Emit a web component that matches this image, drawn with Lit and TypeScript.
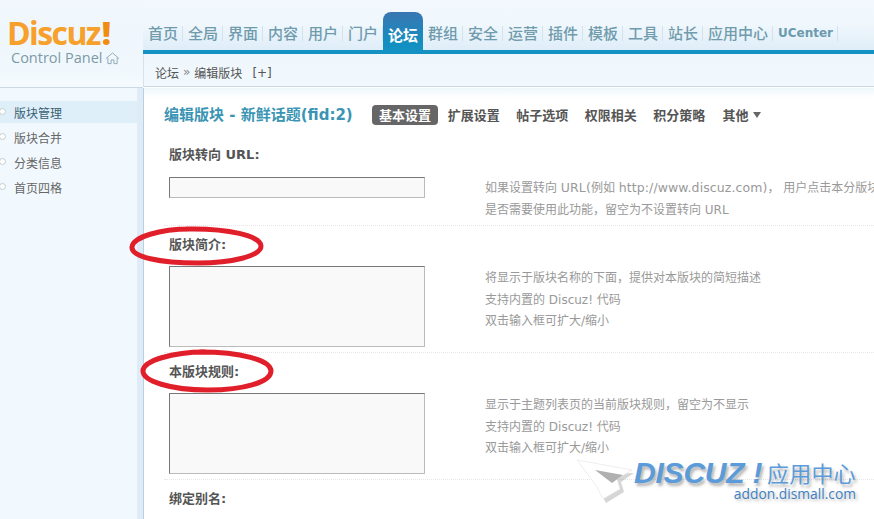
import { LitElement, html, css, svg } from "lit";
import { customElement } from "lit/decorators.js";

const NAV = ["首页","全局","界面","内容","用户","门户","论坛","群组","安全","运营","插件","模板","工具","站长"];
const SIDE = ["版块管理","版块合并","分类信息","首页四格"];
const TABS = ["基本设置","扩展设置","帖子选项","权限相关","积分策略"];

@customElement("app-root")
export class AppRoot extends LitElement {
  static styles = css`
    :host { display:block; width:874px; height:519px; overflow:hidden; position:relative; background:#fff;
      font-family:"DejaVu Sans","Noto Sans CJK SC",sans-serif; font-size:12px; color:#666; }
    .top { display:grid; grid-template-columns:143px 1fr; height:88px; }
    .brand { border-bottom:1px solid #c9dae2; background:linear-gradient(#f1f7fc,#eff7fc 60%,#f4fafe);
      padding:17px 0 0 7px; height:70px; }
    .logo { font-family:"Open Sans",sans-serif; font-weight:700; font-size:32px; line-height:32px; letter-spacing:-1.6px; color:#f7a02c; }
    .logo i { font-style:normal; color:#f08c12; font-weight:800; margin-left:2px; }
    .cp { display:flex; align-items:center; gap:3px; margin:0 0 0 4px; font-family:"Open Sans",sans-serif; font-size:14.5px; line-height:18px; color:#7d9aa8; }
    .right { display:flex; flex-direction:column; min-width:0; }
    .navband { height:50px; box-sizing:border-box; padding-top:12px; background:linear-gradient(#f2f8fd 0,#f1f8fd 22px,#dfedf8 100%); }
    .nav { display:flex; height:42px; align-items:flex-start; position:relative; z-index:1; }
    .nav a { width:40px; height:38px; flex:none; box-sizing:border-box; padding-top:3px; display:flex; align-items:center; justify-content:center; position:relative;
      font-size:15px; font-weight:500; color:#6f9bac; }
    .nav a::after { content:""; position:absolute; right:0; top:14px; height:15px; width:1px; background:#d3e3ec; }
    .nav a.on { height:42px; padding-bottom:4px; padding-top:7px; color:#fff; font-weight:700;
      border-radius:8px 8px 0 0; background:linear-gradient(#3a76b2,#128fc0 75%,#1592c4); }
    .nav a.on::after { display:none; }
    .nav a.app { width:70px; }
    .nav a.uc { width:65px; font-size:12px; font-weight:700; color:#6b9aae; }
    .line { height:4px; flex:none; background:#1592c4; }
    .crumb { height:33px; flex:none; box-sizing:border-box; display:flex; align-items:center; gap:4px; padding:4px 0 0 11px;
      background:linear-gradient(#eef6fc,#f2f9fe); border-left:1px solid #d6e3ea; border-bottom:1px solid #c9dae2; color:#555; }
    .crumb b { font-weight:400; color:#888; }
    .crumb span.plus { margin-left:6px; line-height:20px; padding-top:2px; }
    .body { display:grid; grid-template-columns:144px 1fr; height:431px; }
    .side { background:#f2f9fe; border-right:1px solid #b9d0df; box-sizing:border-box; box-shadow:inset -6px 0 0 #dfebf6; padding-top:13px; }
    .side div { height:22px; margin:0 6px 3px 0; padding-left:14px; display:flex; align-items:center; position:relative; color:#666; }
    .side div::before { content:""; position:absolute; left:-1px; top:7px; width:5px; height:5px; border:1px solid #c4ccd0; border-radius:50%; background:#fff; }
    .side div.on { background:#deeffa; color:#3b5f73; }
    .main { min-width:0; padding:17px 0 0 20px; background:linear-gradient(#eef7fb,#fff 10px); overflow:hidden; }
    .head { display:flex; align-items:center; height:20px; margin-bottom:11px; white-space:nowrap; }
    .title { font-size:15px; font-weight:700; color:#3a94b4; width:208px; flex:none; line-height:20px; margin-top:-1px; }
    .tabs { display:flex; align-items:center; font-size:13px; font-weight:700; color:#555; }
    .tabs span { width:68.5px; height:20px; line-height:21px; text-align:center; white-space:nowrap; flex:none; }
    .tabs span.on { background:#666; color:#fff; border-radius:4px; width:66px; margin-right:1.5px; }
    .tabs .more { width:auto; display:flex; align-items:center; gap:4px; padding-left:9px; }
    .more::after { content:""; border:4px solid transparent; border-top:6px solid #666; border-bottom:0; }
    .sec { padding:8px 0 5px 5px; border-bottom:1px dotted #e6e6e6; }
    .sec.first { padding-bottom:4px; }
    .sec.last { border:0; }
    .lab { font-size:13px; font-weight:700; color:#555; height:20px; line-height:22px; margin-bottom:12px; white-space:nowrap; }
    .first .lab { margin-bottom:13px; }
    .row { display:flex; white-space:nowrap; }
    .inp { width:256px; flex:none; box-sizing:border-box; background:#f9f9f9; height:21px; border:1px solid; border-color:#777 #bbb #bbb #777; }
    .inp.ta { height:81px; }
    .hint { margin:0 0 0 60px; line-height:21.5px; color:#999; }
    .sec:not(.first) .hint { margin-top:2px; }
    .hint span { font-size:12.5px; letter-spacing:.1px; }
    .ink { position:absolute; left:0; top:0; width:874px; height:519px; pointer-events:none; }
    .mark { position:absolute; left:634px; top:458px; width:226px; pointer-events:none; white-space:nowrap; color:#5b9bd9; }
    .mark .l1 { display:flex; align-items:center; height:29px; text-shadow:2px 3px 3px rgba(90,90,90,.45); }
    .mark .d { font-family:"Liberation Sans",sans-serif; font-style:italic; font-weight:700; font-size:30px; line-height:29px; letter-spacing:-.2px; width:133px; }
    .mark .c { font-family:"Noto Sans CJK SC",sans-serif; font-size:22px; line-height:29px; letter-spacing:.2px; }
    .mark .l2 { font-family:"Open Sans",sans-serif; font-size:13.8px; line-height:14px; text-align:right; color:#3f7fc0; text-shadow:2px 2px 3px rgba(90,90,90,.4); padding-right:4px; }
  `;

  private sec(label: string, hints: unknown[], ta: boolean, cls = "") {
    return html`<section class="sec ${cls}">
      <div class="lab">${label}</div>
      ${hints.length ? html`<div class="row">
        <div class="inp ${ta ? "ta" : ""}"></div>
        <div class="hint">${hints.map((h) => html`<div>${h}</div>`)}</div>
      </div>` : ""}
    </section>`;
  }

  render() {
    return html`
      <div class="top">
        <div class="brand">
          <div class="logo">Discuz<i>!</i></div>
          <div class="cp">Control Panel
            <svg width="15" height="13" viewBox="0 0 16 14" fill="none" stroke="#8aa6b2" stroke-width="1">
              <path d="M.8 7.2 8 1l7.2 6.2M3 6v6.5h3.5V8.5h3v4H13V6"/>
            </svg>
          </div>
        </div>
        <div class="right">
          <div class="navband">
            <nav class="nav">
              ${NAV.map((n) => html`<a class=${n === "论坛" ? "on" : ""}>${n}</a>`)}
              <a class="app">应用中心</a><a class="uc">UCenter</a>
            </nav>
          </div>
          <div class="line"></div>
          <div class="crumb">论坛 <b>»</b> 编辑版块 <span class="plus">[+]</span></div>
        </div>
      </div>
      <div class="body">
        <aside class="side">
          ${SIDE.map((s, i) => html`<div class=${i === 0 ? "on" : ""}>${s}</div>`)}
        </aside>
        <main class="main">
          <div class="head">
            <div class="title">编辑版块 - 新鲜话题(fid:2)</div>
            <div class="tabs">
              ${TABS.map((t, i) => html`<span class=${i === 0 ? "on" : ""}>${t}</span>`)}
              <span class="more">其他</span>
            </div>
          </div>
          ${this.sec("版块转向 URL:", [html`如果设置转向 <span>URL(</span>例如 <span>http://www.discuz.com)</span>，&nbsp;用户点击本分版块将进入转向中设置的 URL`, "是否需要使用此功能，留空为不设置转向 URL"], false, "first")}
          ${this.sec("版块简介:", ["将显示于版块名称的下面，提供对本版块的简短描述", "支持内置的 Discuz! 代码", "双击输入框可扩大/缩小"], true)}
          ${this.sec("本版块规则:", ["显示于主题列表页的当前版块规则，留空为不显示", "支持内置的 Discuz! 代码", "双击输入框可扩大/缩小"], true)}
          ${this.sec("绑定别名:", [], false, "last")}
        </main>
      </div>
      <svg class="ink" viewBox="0 0 874 519" fill="none">
        ${svg`<g stroke="#e01f2b" stroke-width="5" stroke-linecap="round">
          <path d="M190 229C160 229 133 237 132 247C131 257 160 263 198 263C232 263 261 256 261 246C261 236 228 228 186 229"/>
          <path d="M205 352C172 352 143 361 143 371C143 381 170 390 208 390C244 390 271 382 271 371C271 360 240 352 200 352"/>
        </g>
        <path d="M596 475 L634 473 L621 482 L624 492 L606 503 L600 492Z" fill="#8a8a8a" opacity=".35"/>
        <path d="M577 460 L632 470 L617 479 L620 489 L603 499 L597 487Z" fill="#fff" stroke="#e6e6e6" stroke-width=".7"/>
        <path d="M595 470 L623 475 L612 483Z" fill="#b0b0b0"/>`}
      </svg>
      <div class="mark">
        <div class="l1"><span class="d">DISCUZ !</span><span class="c">应用中心</span></div>
        <div class="l2">addon.dismall.com</div>
      </div>
    `;
  }
}
